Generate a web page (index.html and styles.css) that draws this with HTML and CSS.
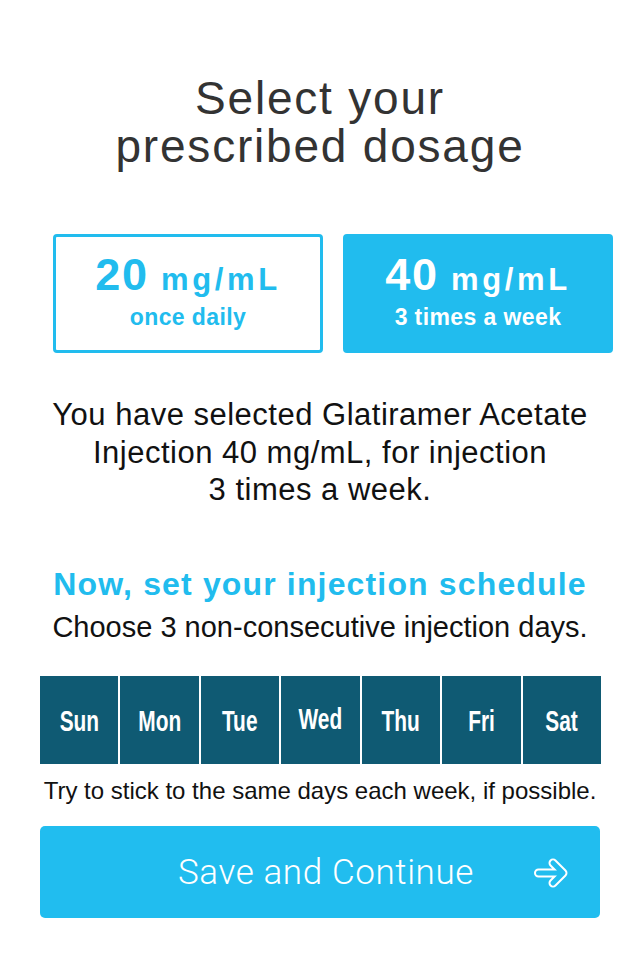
FILE: index.html
```html
<!DOCTYPE html>
<html lang="en">
<head>
<meta charset="utf-8">
<title>Select your prescribed dosage</title>
<link rel="stylesheet" href="styles.css">
</head>
<body>
<main class="screen">
  <h1 class="title">Select your<br>prescribed dosage</h1>
  <div class="doses">
    <div class="dose">
      <div class="dose-amount"><span class="dose-num">20</span> mg/mL</div>
      <div class="dose-freq">once daily</div>
    </div>
    <div class="dose dose-selected">
      <div class="dose-amount"><span class="dose-num">40</span> mg/mL</div>
      <div class="dose-freq">3 times a week</div>
    </div>
  </div>
  <p class="summary">You have selected Glatiramer Acetate<br>Injection 40 mg/mL, for injection<br>3 times a week.</p>
  <h2 class="schedule-title">Now, set your injection schedule</h2>
  <p class="schedule-sub">Choose 3 non-consecutive injection days.</p>
  <div class="days">
    <div class="day"><span class="day-label">Sun</span></div>
    <div class="day"><span class="day-label">Mon</span></div>
    <div class="day"><span class="day-label">Tue</span></div>
    <div class="day day-raised"><span class="day-label">Wed</span></div>
    <div class="day"><span class="day-label">Thu</span></div>
    <div class="day"><span class="day-label">Fri</span></div>
    <div class="day"><span class="day-label">Sat</span></div>
  </div>
  <p class="hint">Try to stick to the same days each week, if possible.</p>
  <div class="save">
    <span class="save-label">Save and Continue</span>
    <svg class="save-icon" width="40" height="40" viewBox="0 0 40 40" aria-hidden="true">
      <g fill="none" stroke-linecap="round" stroke-linejoin="round">
        <path d="M6.5 20 H30 M21 10 L31 20 L21 30" stroke="#ffffff" stroke-width="9"/>
        <path d="M6.5 20 H30 M21 10 L31 20 L21 30" stroke="#21bdef" stroke-width="5"/>
      </g>
    </svg>
  </div>
</main>
</body>
</html>
```
FILE: styles.css
```css
* { box-sizing: border-box; }
html, body { margin: 0; padding: 0; background: #ffffff; }
body {
  width: 640px;
  height: 960px;
  font-family: "Liberation Sans", Arial, sans-serif;
  color: #111111;
}
.screen {
  display: flex;
  flex-direction: column;
  align-items: stretch;
}
.title {
  margin: 74px 0 0;
  font-size: 46px;
  line-height: 48px;
  font-weight: 400;
  letter-spacing: 1.8px;
  color: #333333;
  text-align: center;
}
.doses {
  display: flex;
  gap: 20px;
  margin-top: 64px;
  padding: 0 27px 0 53px;
}
.dose {
  width: 270px;
  height: 119px;
  border: 3px solid #21bcee;
  border-radius: 4px;
  color: #21bcee;
  display: flex;
  flex-direction: column;
  align-items: center;
  justify-content: flex-start;
  padding-top: 18px;
  font-weight: 700;
}
.dose-selected {
  background: #21bcee;
  color: #ffffff;
}
.dose-amount {
  font-size: 31px;
  line-height: 40px;
  letter-spacing: 3.6px;
  white-space: nowrap;
}
.dose-num {
  font-size: 45px;
  letter-spacing: 1.8px;
}
.dose-freq {
  font-size: 23px;
  line-height: 24px;
  letter-spacing: 0.4px;
  margin-top: 5px;
}
.summary {
  margin: 43px 0 0;
  font-size: 31px;
  line-height: 37.5px;
  letter-spacing: 0.5px;
  text-align: center;
  color: #111111;
}
.schedule-title {
  margin: 57px 0 0;
  font-size: 32px;
  line-height: 36px;
  font-weight: 700;
  letter-spacing: 1.15px;
  color: #21bcee;
  text-align: center;
}
.schedule-sub {
  margin: 9.5px 0 0;
  font-size: 29px;
  line-height: 32px;
  text-align: center;
}
.days {
  display: grid;
  grid-template-columns: repeat(7, 1fr);
  gap: 2px;
  margin: 32.5px 39px 0 40px;
  height: 88px;
}
.day {
  background: #0f5a73;
  color: #ffffff;
  font-weight: 700;
  font-size: 29px;
  display: flex;
  align-items: center;
  justify-content: center;
  padding-top: 4px;
}
.day-label {
  display: inline-block;
  transform: scaleX(0.72);
}
.day-raised { padding-top: 0; }
.hint {
  margin: 13.7px 0 0;
  font-size: 24px;
  line-height: 28px;
  text-align: center;
}
.save {
  margin: 21.3px 40px 0;
  height: 92px;
  background: #21bdef;
  border-radius: 5px;
  display: flex;
  align-items: center;
  justify-content: center;
  position: relative;
  padding-left: 12px;
}
.save-label {
  font-family: Roboto, "Liberation Sans", sans-serif;
  font-weight: 300;
  font-size: 35px;
  letter-spacing: 0.6px;
  color: #ffffff;
}
.save-icon {
  position: absolute;
  right: 28px;
  top: 26.5px;
}
```
